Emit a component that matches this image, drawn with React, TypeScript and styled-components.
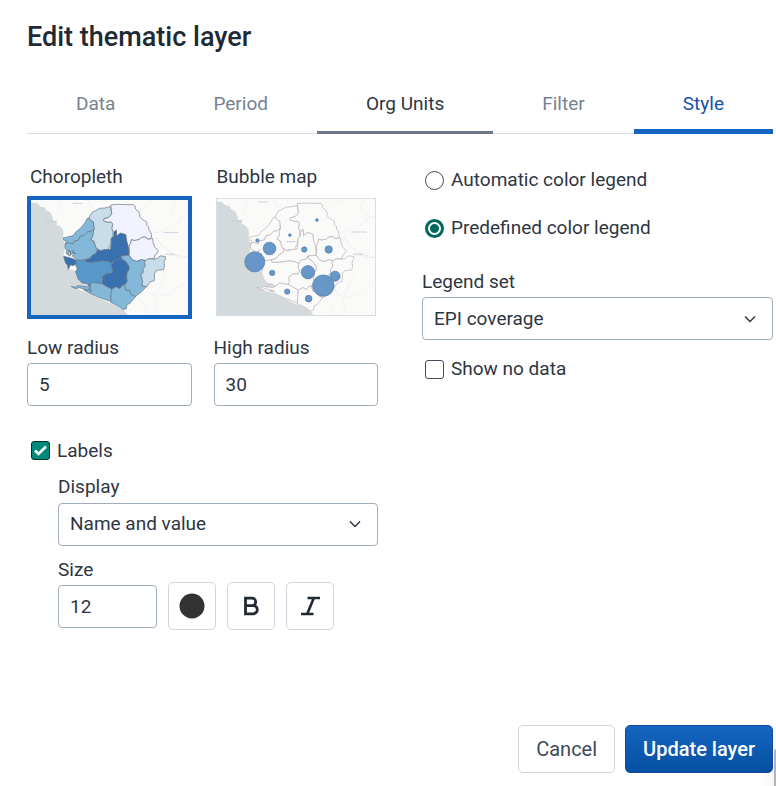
import React, { useState } from "react";
import styled, { createGlobalStyle, css } from "styled-components";

const GlobalStyle = createGlobalStyle`
  *, *::before, *::after { box-sizing: border-box; }
  body {
    margin: 0;
    background: #ffffff;
    color: #2e3642;
    font-family: Roboto, "Liberation Sans", sans-serif;
    font-size: 19px;
    line-height: 24px;
  }
  button, input, select { font: inherit; color: inherit; margin: 0; }
`;

const Dialog = styled.main`
  display: flex;
  flex-direction: column;
  min-height: 100vh;
  padding: 20px 3px 13px 27px;
`;

const Title = styled.h1`
  margin: 0;
  color: #212934;
  font-size: 27px;
  line-height: 34px;
  font-weight: 500;
`;

const Tabs = styled.nav`
  display: flex;
  margin-top: 20px;
  box-shadow: inset 0 -1px 0 #d5dde5;
`;

type TabState = "normal" | "hovered" | "active";

const Tab = styled.button<{ $state: TabState }>`
  flex: 1 1 auto;
  height: 60px;
  padding: 0;
  border: 0;
  background: none;
  color: #768191;
  white-space: nowrap;
  ${({ $state }) =>
    $state === "hovered" &&
    css`
      color: #2e3642;
      box-shadow: inset 0 -3px 0 #6c7787;
    `}
  ${({ $state }) =>
    $state === "active" &&
    css`
      color: #1750a8;
      box-shadow: inset 0 -5px 0 #1565c0;
    `}
`;

const Columns = styled.div`
  display: grid;
  grid-template-columns: 1fr 1fr;
  gap: 44px;
  margin-top: 31px;
`;

const Column = styled.section`
  min-width: 0;
`;

const Pair = styled.div`
  display: grid;
  grid-template-columns: 1fr 1fr;
  align-items: start;
  gap: 22px;
`;

const MapChoice = styled.button`
  display: block;
  width: 100%;
  padding: 0;
  border: 0;
  background: none;
  text-align: left;
`;

const MapName = styled.span`
  display: block;
  padding-left: 3px;
`;

const Thumb = styled.span<{ $selected: boolean }>`
  display: block;
  margin-top: 7px;
  border: ${({ $selected }) => ($selected ? "4px solid #1565c0" : "1px solid #d5dde5")};
  ${({ $selected }) => !$selected && "margin: 9px 2px 0;"}
  svg { display: block; width: 100%; height: auto; }
`;

const Field = styled.div`
  display: flex;
  flex-direction: column;
  gap: 3px;
`;

const RadiusFields = styled(Pair)`
  margin-top: 17px;
`;

const controlStyle = css`
  width: 100%;
  height: 43px;
  padding: 0 11px;
  border: 1px solid #a0adba;
  border-radius: 4px;
  background: #ffffff;
`;

const TextInput = styled.input`
  ${controlStyle}
`;

const SelectFrame = styled.div`
  display: grid;
  align-items: center;
  > * { grid-area: 1 / 1; }
  > svg { justify-self: end; margin-right: 15px; pointer-events: none; }
`;

const NativeSelect = styled.select`
  ${controlStyle}
  appearance: none;
`;

const Choice = styled.label`
  display: flex;
  align-items: center;
  gap: 7px;
  padding-left: 3px;
`;

const boxStyle = css`
  appearance: none;
  flex: none;
  width: 19px;
  height: 19px;
  border: 1px solid #404b5a;
  background: #ffffff;
`;

const Radio = styled.input`
  ${boxStyle}
  border-radius: 50%;
  &:checked {
    border: 3px solid #00695c;
    background: radial-gradient(circle, #00695c 4px, #ffffff 5px);
  }
`;

const Checkbox = styled.input`
  ${boxStyle}
  border-radius: 3px;
  &:checked {
    border-color: #00332b;
    background: #00897b;
  }
`;

const TickFrame = styled.span`
  display: grid;
  place-items: center;
  > * { grid-area: 1 / 1; }
  > svg { pointer-events: none; }
`;

const LabelsToggle = styled.div`
  margin-top: 33px;
  padding-left: 1px;
`;

const LabelOptions = styled.div`
  display: flex;
  flex-direction: column;
  gap: 12px;
  margin-top: 12px;
  padding-left: 31px;
`;

const DisplayField = styled(Field)`
  gap: 4px;
`;

const SizeRow = styled.div`
  display: flex;
  align-items: flex-end;
  gap: 11px;
`;

const SizeField = styled(Field)`
  width: 99px;
  padding-bottom: 2px;
`;

const IconButton = styled.button`
  display: grid;
  place-items: center;
  width: 48px;
  height: 48px;
  padding: 0;
  border: 1px solid #d0d5db;
  border-radius: 5px;
  background: #ffffff;
`;

const LegendModes = styled.div`
  display: flex;
  flex-direction: column;
  gap: 24px;
  padding-top: 3px;
`;

const LegendField = styled(Field)`
  margin: 30px 0 17px;
`;

const Footer = styled.footer`
  display: flex;
  justify-content: flex-end;
  gap: 10px;
  margin-top: auto;
`;

const Action = styled.button<{ $primary?: boolean }>`
  height: 48px;
  padding: 0 17px;
  border: 1px solid ${({ $primary }) => ($primary ? "#104a9c" : "#d0d5db")};
  border-radius: 5px;
  background: ${({ $primary }) =>
    $primary ? "linear-gradient(180deg, #1565c0 0%, #0650a3 100%)" : "#ffffff"};
  color: ${({ $primary }) => ($primary ? "#ffffff" : "#404b5a")};
  font-size: 20px;
  font-weight: ${({ $primary }) => ($primary ? 500 : 400)};
`;

const EdgeShade = styled.div`
  position: fixed;
  right: 0;
  bottom: 0;
  width: 2px;
  height: 37px;
  border-top-left-radius: 2px;
  background: #b4b4b4;
  box-shadow: -1px 14px 14px rgba(0, 0, 0, 0.3);
`;

const LAND = "#fafaf9";
const SEA = "#d4dadc";

const districts = [
  { id: "koinadugu", tone: "#f1f2fe", d: "M273 45L290 43L322 44L342 44L347 50L347 57L356 64L361 74L359 80L368 88L382 97L381 106L387 111L388 122L394 127L396 143L386 148L375 141L366 143L358 149L345 152L335 149L333 160L328 170L327 190L322 165L318 135L302 130L291 139L290 121L281 127L276 116L279 103L275 97L262 97L250 92L253 86L265 83L271 78L276 72Z" },
  { id: "kono", tone: "#f1f2fe", d: "M335 150L345 152L358 149L366 143L375 141L386 148L399 146L401 160L405 171L416 183L411 192L406 196L404 206L386 207L380 212L365 210L350 215L338 210L328 196L330 180L328 170L333 160Z" },
  { id: "bombali", tone: "#c8dcea", d: "M208 82L216 68L231 60L240 55L255 54L272 50L276 72L271 78L265 83L253 86L250 92L262 97L275 97L279 103L276 116L280 128L279 141L274 150L272 163L264 181L250 179L242 183L228 173L222 154L212 150L219 138L218 124L224 119L220 96L211 91Z" },
  { id: "tonkolili", tone: "#3970af", d: "M290 121L291 139L302 130L318 134L320 150L326 171L328 196L316 197L303 199L299 208L285 210L275 221L266 215L250 213L228 216L210 218L198 216L196 209L211 205L216 197L230 189L231 179L244 183L255 180L272 178L275 158L274 145L282 140L282 128Z" },
  { id: "bo", tone: "#3970af", d: "M303 199L307 208L318 214L329 231L328 241L322 249L321 266L324 272L318 283L308 287L300 297L289 291L276 299L262 291L248 286L247 276L249 270L247 261L259 251L276 250L279 240L274 233L277 221L285 210L299 208Z" },
  { id: "kambia", tone: "#83b8d9", d: "M130 144L144 141L160 137L169 125L182 115L195 99L202 86L208 84L212 91L221 96L222 116L213 125L203 126L193 137L181 139L176 151L164 154L158 163L145 158L136 163L139 153L131 151Z" },
  { id: "port-loko", tone: "#83b8d9", d: "M136 163L145 158L158 163L164 154L176 151L181 139L193 137L203 126L213 125L222 118L219 138L213 150L222 154L228 173L233 180L230 189L216 197L211 205L196 209L184 212L169 210L157 198L168 190L154 193L163 181L151 188L145 181L148 197L138 190L141 184L135 172Z" },
  { id: "western", tone: "#3970af", d: "M131 199L142 202L155 205L168 211L170 221L160 228L152 225L145 239L143 226L137 220Z" },
  { id: "moyamba", tone: "#5898c8", d: "M169 211L184 212L196 209L198 216L210 218L228 216L250 213L266 215L277 221L274 233L279 240L276 250L259 251L247 261L249 270L247 282L230 280L220 277L208 288L202 282L185 279L174 267L167 246L172 237L168 227Z" },
  { id: "bonthe", tone: "#83b8d9", d: "M154 290L165 292L175 288L202 291L208 288L220 277L230 280L247 282L262 291L276 299L274 315L273 335L254 329L235 322L211 311L191 300L207 302L178 294L168 297Z" },
  { id: "pujehun", tone: "#83b8d9", d: "M276 299L289 291L300 297L308 287L315 288L318 301L329 301L335 315L348 320L339 331L330 342L322 344L320 357L311 360L299 351L273 338L274 315Z" },
  { id: "kenema", tone: "#83b8d9", d: "M305 199L318 197L328 197L338 210L350 215L365 210L378 212L374 219L378 228L370 238L371 248L364 255L369 275L367 288L380 291L367 305L348 320L335 315L329 301L318 301L315 288L324 272L321 266L322 249L328 241L329 231L318 214L307 208Z" },
  { id: "kailahun", tone: "#c8dcea", d: "M378 212L386 207L404 208L414 206L422 198L437 200L438 208L433 216L435 229L432 239L411 242L405 251L404 273L390 277L382 291L367 288L369 275L364 255L371 248L370 238L378 228L374 219Z" },
];

const bubbles = [
  [335, 90, 4], [254, 135, 4], [157, 151, 5], [193, 175, 19], [297, 178, 8],
  [370, 178, 11], [149, 215, 30], [201, 248, 8], [308, 246, 20], [389, 258, 15],
  [354, 286, 32], [246, 304, 8], [310, 325, 10],
];

function BaseMap() {
  return (
    <>
      <path fill={LAND} d="M0 0H560V420H0Z" />
      <path
        fill={SEA}
        d="M0 28L33 38L52 40L62 50L74 52L78 61L91 67L97 80L99 92L112 93L109 104L120 109L129 119L131 134L128 148L136 163L134 182L130 199L140 222L146 238L166 243L169 260L181 277L205 283L208 290L154 290L178 300L211 312L250 331L298 352L312 362L328 380L335 420H0Z"
      />
      <g fill="none" stroke="#efeeee" strokeWidth="2">
        <path d="M120 30L125 55L112 75M204 30L211 48L225 57M355 64L374 56L389 38L404 33M391 124L411 128L432 120L455 111L480 86L504 81M437 200L461 195L480 203L510 201M382 291L390 311L412 320L450 312L472 293L510 275M402 375L411 354L408 320L425 280L437 252M470 30L455 65L482 80L476 101M350 320L367 334L381 356L375 380" />
      </g>
      <path d="M400 145L413 146L424 164L439 178L458 191L469 199L480 196L492 204L510 199" fill="none" stroke="#f0e2e7" strokeWidth="2" />
      <g stroke="#c3cbd8" strokeWidth="3" strokeDasharray="5 1 3 1">
        <path d="M159 40H187M75 95H108M432 128H476M437 193H466" />
      </g>
    </>
  );
}

function ChoroplethMap() {
  return (
    <svg viewBox="33 30 471 345" aria-hidden="true">
      <BaseMap />
      <g stroke="#657381" strokeWidth="2" strokeLinejoin="round">
        {districts.map((item) => (
          <path key={item.id} d={item.d} fill={item.tone} />
        ))}
      </g>
      <path d="M206 286L213 289L207 297L215 302L210 309M146 182L153 187L150 199M158 184L164 190" fill="none" stroke="#56687a" strokeWidth="3" />
    </svg>
  );
}

function BubbleMap() {
  return (
    <svg viewBox="36 27 474 348" aria-hidden="true">
      <g transform="translate(-2 -5) scale(1.02)">
        <BaseMap />
        <g fill={LAND} stroke="#b9b1b4" strokeWidth="2" strokeLinejoin="round">
          {districts.map((item) => (
            <path key={item.id} d={item.d} />
          ))}
        </g>
        <path d="M242 157H268" stroke="#b5bfd0" strokeWidth="3" strokeDasharray="5 1 3 1" />
      </g>
      <g fill="#6796c8" stroke="#4e7cab" strokeWidth="2">
        {bubbles.map(([cx, cy, r]) => (
          <circle key={`${cx}-${cy}`} cx={cx} cy={cy} r={r} />
        ))}
      </g>
    </svg>
  );
}

function Chevron() {
  return (
    <svg width="16" height="16" viewBox="0 0 16 16" fill="none" aria-hidden="true">
      <path d="M3 5.5L8 10.5L13 5.5" stroke="#2e3642" strokeWidth="1.5" />
    </svg>
  );
}

function Tick() {
  return (
    <svg width="19" height="19" viewBox="0 0 19 19" fill="none" aria-hidden="true">
      <path d="M4 9.5L7.5 13L15 5.5" stroke="#ffffff" strokeWidth="2.6" />
    </svg>
  );
}

function BoldIcon() {
  return (
    <svg width="28" height="28" viewBox="0 0 28 28" fill="none" aria-hidden="true">
      <path
        d="M8.5 6.2H15A3.7 3.7 0 0 1 15 13.6H8.5ZM8.5 13.6H16.2A4.1 4.1 0 0 1 16.2 21.8H8.5Z"
        stroke="#212934"
        strokeWidth="2.8"
      />
    </svg>
  );
}

function ItalicIcon() {
  return (
    <svg width="28" height="28" viewBox="0 0 28 28" fill="none" aria-hidden="true">
      <path d="M11.5 6H24M5 22H17.5M17.8 6L11.2 22" stroke="#212934" strokeWidth="2.6" />
    </svg>
  );
}

const tabs: { name: string; state: TabState }[] = [
  { name: "Data", state: "normal" },
  { name: "Period", state: "normal" },
  { name: "Org Units", state: "hovered" },
  { name: "Filter", state: "normal" },
  { name: "Style", state: "active" },
];

export default function App() {
  const [mapType, setMapType] = useState("choropleth");
  const [showLabels, setShowLabels] = useState(true);

  return (
    <>
      <GlobalStyle />
      <Dialog>
        <Title>Edit thematic layer</Title>
        <Tabs>
          {tabs.map((tab) => (
            <Tab key={tab.name} type="button" $state={tab.state}>
              {tab.name}
            </Tab>
          ))}
        </Tabs>
        <Columns>
          <Column>
            <Pair>
              <MapChoice type="button" onClick={() => setMapType("choropleth")}>
                <MapName>Choropleth</MapName>
                <Thumb $selected={mapType === "choropleth"}><ChoroplethMap /></Thumb>
              </MapChoice>
              <MapChoice type="button" onClick={() => setMapType("bubble")}>
                <MapName>Bubble map</MapName>
                <Thumb $selected={mapType === "bubble"}><BubbleMap /></Thumb>
              </MapChoice>
            </Pair>
            <RadiusFields>
              <Field>
                <label htmlFor="low">Low radius</label>
                <TextInput id="low" defaultValue="5" />
              </Field>
              <Field>
                <label htmlFor="high">High radius</label>
                <TextInput id="high" defaultValue="30" />
              </Field>
            </RadiusFields>
            <LabelsToggle>
              <Choice>
                <TickFrame>
                  <Checkbox
                    type="checkbox"
                    checked={showLabels}
                    onChange={() => setShowLabels(!showLabels)}
                  />
                  {showLabels && <Tick />}
                </TickFrame>
                Labels
              </Choice>
            </LabelsToggle>
            <LabelOptions>
              <DisplayField>
                <label htmlFor="display">Display</label>
                <SelectFrame>
                  <NativeSelect id="display">
                    <option>Name and value</option>
                  </NativeSelect>
                  <Chevron />
                </SelectFrame>
              </DisplayField>
              <SizeRow>
                <SizeField>
                  <label htmlFor="size">Size</label>
                  <TextInput id="size" defaultValue="12" />
                </SizeField>
                <IconButton type="button" aria-label="Label color">
                  <svg width="26" height="26" viewBox="0 0 26 26" aria-hidden="true">
                    <circle cx="13" cy="13" r="12.5" fill="#333333" />
                  </svg>
                </IconButton>
                <IconButton type="button" aria-label="Bold"><BoldIcon /></IconButton>
                <IconButton type="button" aria-label="Italic"><ItalicIcon /></IconButton>
              </SizeRow>
            </LabelOptions>
          </Column>
          <Column>
            <LegendModes>
              <Choice>
                <Radio type="radio" name="legend" />
                Automatic color legend
              </Choice>
              <Choice>
                <Radio type="radio" name="legend" defaultChecked />
                Predefined color legend
              </Choice>
            </LegendModes>
            <LegendField>
              <label htmlFor="legend-set">Legend set</label>
              <SelectFrame>
                <NativeSelect id="legend-set">
                  <option>EPI coverage</option>
                </NativeSelect>
                <Chevron />
              </SelectFrame>
            </LegendField>
            <Choice>
              <Checkbox type="checkbox" />
              Show no data
            </Choice>
          </Column>
        </Columns>
        <Footer>
          <Action type="button">Cancel</Action>
          <Action type="button" $primary>Update layer</Action>
        </Footer>
      </Dialog>
      <EdgeShade />
    </>
  );
}
